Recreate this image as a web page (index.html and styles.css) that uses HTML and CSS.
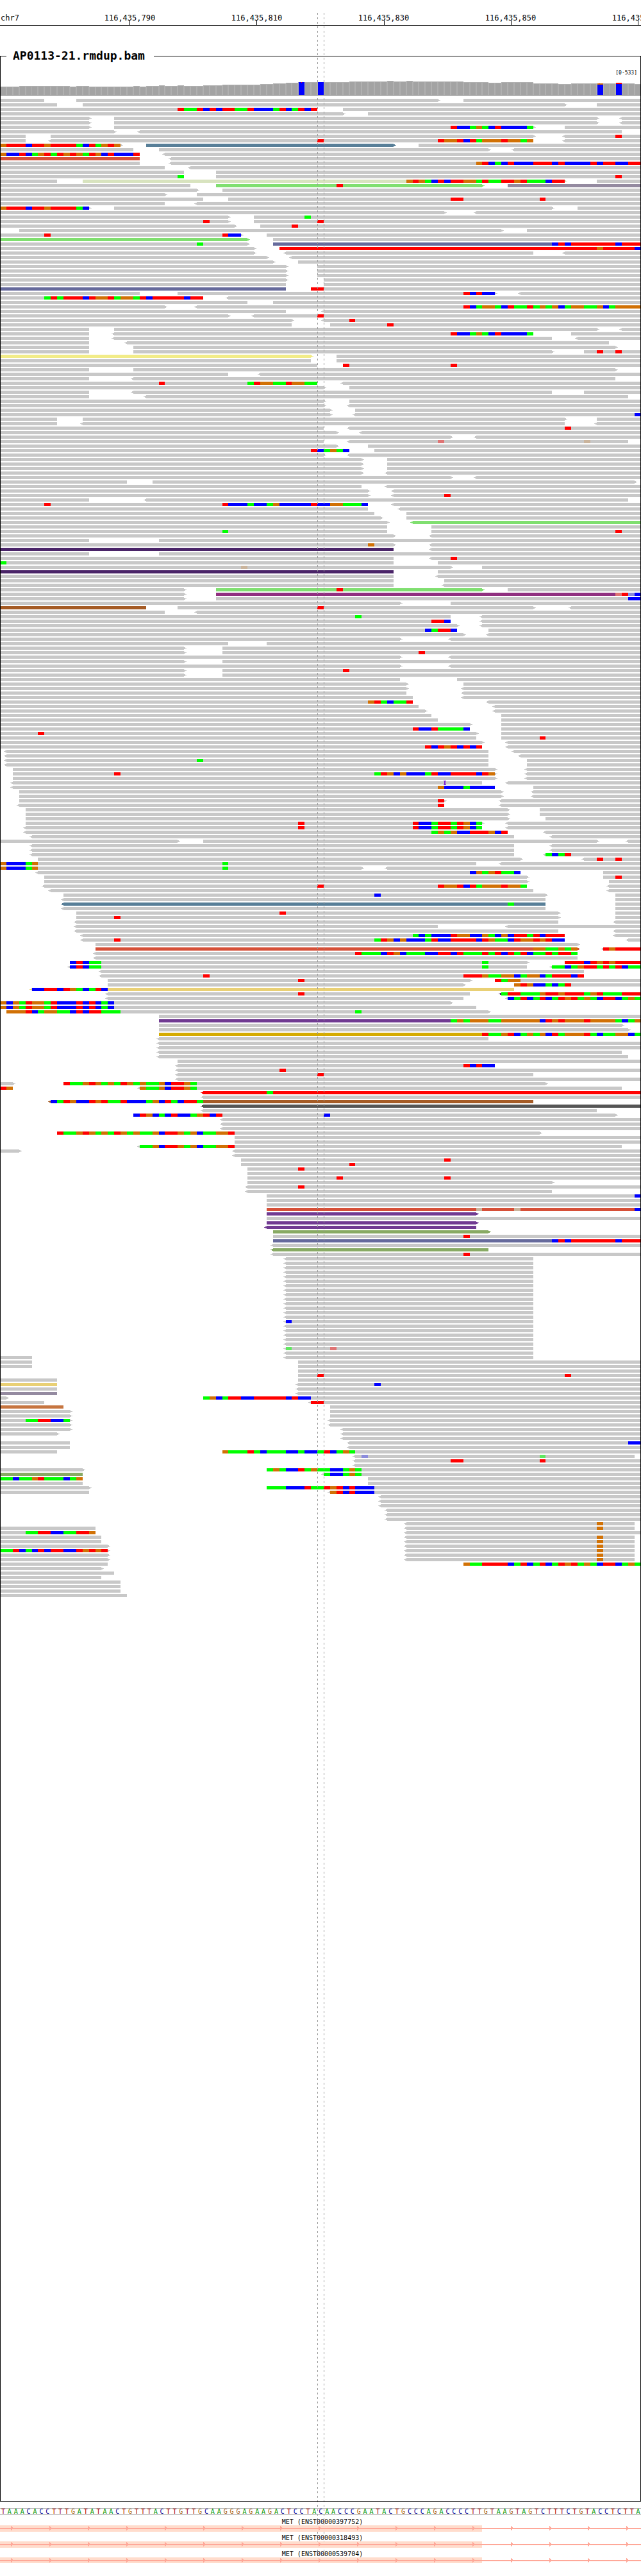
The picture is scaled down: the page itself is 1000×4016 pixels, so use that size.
FILE: index.html
```html
<!DOCTYPE html>
<html lang="en">
<head>
<meta charset="utf-8">
<title>AP0113-21.rmdup.bam</title>
<link rel="stylesheet" href="styles.css">
</head>
<body>
<main class="viewer">
  <header class="ruler" id="ruler"><span class="chrom">chr7</span></header>
  <fieldset class="track">
    <legend class="track-name">AP0113-21.rmdup.bam</legend>
    <p class="range">[0-533]</p>
    <svg class="coverage" id="coverage" aria-label="Coverage"></svg>
    <svg class="reads" id="reads" aria-label="Aligned reads"></svg>
  </fieldset>
  <div class="sequence" id="sequence"></div>
  <section class="genes" id="genes"></section>
  <div class="guide guide-start"></div>
  <div class="guide guide-end"></div>
</main>
<script src="viewer.js"></script>
</body>
</html>
```
FILE: styles.css
```css
* { box-sizing: border-box; }

body {
  margin: 0;
  background: #fff;
  color: #000;
  font-family: "DejaVu Sans Mono", monospace;
}

.viewer {
  position: relative;
  isolation: isolate;
  display: flex;
  flex-direction: column;
  min-height: 100vh;
  padding-bottom: 20px;
  overflow: hidden;
}

.ruler {
  position: relative;
  height: 40px;
  padding: 20px 0 0 1px;
  border-bottom: 1px solid #000;
  font-size: 12px;
  line-height: 16px;
}

.tick {
  position: absolute;
  top: 20px;
  bottom: 0;
  width: 100px;
  margin-left: -50px;
  text-align: center;
}

.tick::after {
  content: "";
  position: absolute;
  left: 50px;
  bottom: 0;
  width: 1px;
  height: 7px;
  background: #000;
}

.track {
  flex: 1;
  min-width: 0;
  margin: 36px 0 0;
  padding: 0;
  border: 1px solid #000;
}

.track-name {
  margin-left: 9px;
  padding: 0 14px 0 10px;
  font-size: 18px;
  font-weight: bold;
  line-height: 22px;
}

.range {
  margin: 10px 5px 0;
  font-size: 8px;
  line-height: 12px;
  text-align: right;
}

.coverage,
.reads {
  position: relative;
  display: block;
  width: calc(100% + 2px);
  margin-left: -1px;
  shape-rendering: crispEdges;
}

.coverage { z-index: -1; height: 29px; margin-bottom: 5px; }
.reads { z-index: -3; }

.guide {
  position: absolute;
  z-index: -2;
  top: 20px;
  bottom: 25px;
  width: 1px;
  background: repeating-linear-gradient(#999 0 3px, transparent 3px 7px);
}

.guide-start { left: calc(100% * 50 / 101); }
.guide-end { left: calc(100% * 51 / 101); }

.sequence {
  display: flex;
  margin-top: 10px;
  border-top: 1px solid #aaa;
  border-bottom: 1px solid #aaa;
  font-size: 10px;
  line-height: 9px;
}

.base { flex: 1 1 0; min-width: 0; text-align: center; }
.base-A { color: #009600; }
.base-C { color: #000096; }
.base-G { color: #aa6414; }
.base-T { color: #aa0000; }

.genes { padding-top: 6px; }

.gene { height: 25px; }
.gene:last-child { height: 19px; }

.gene-name {
  display: block;
  height: 10px;
  padding-left: 6px;
  font-size: 10px;
  line-height: 10px;
  text-align: center;
}

.gene-shape {
  display: block;
  width: 100%;
  height: 10px;
  shape-rendering: crispEdges;
}

.gene:last-child .gene-shape { height: 9px; }
```
FILE: viewer.js
```js
const NS = "http://www.w3.org/2000/svg";
const BASES = 101;
const pct = (n) => (n * 100) / BASES + "%";

function add(parent, name, attrs) {
  const node = document.createElementNS(NS, name);
  for (const key in attrs) node.setAttribute(key, attrs[key]);
  parent.appendChild(node);
  return node;
}

/* Ruler */
const ruler = document.getElementById("ruler");
[790, 810, 830, 850, 870].forEach((n, i) => {
  const tick = document.createElement("span");
  tick.className = "tick";
  tick.style.left = pct(20.45 + i * 20);
  tick.textContent = "116,435," + n;
  ruler.appendChild(tick);
});

/* Coverage: [number of bases, bar height] */
const coverage = [
  [3, 13], [8, 14], [1, 13], [2, 14], [7, 13], [1, 14], [1, 13], [2, 14], [1, 15],
  [2, 14], [1, 15], [3, 14], [3, 15], [6, 16], [2, 17], [2, 18], [2, 19], [8, 20],
  [6, 21], [1, 22], [2, 21], [1, 22], [8, 21], [4, 20], [2, 19], [5, 20], [4, 18],
  [2, 17], [10, 18], [1, 17]
];
const variants = {
  47: [["#00f", 20, 20], ["#f00", 20, 1, 0.45]],
  50: [["#00f", 20, 20], ["#f00", 20, 1, 0.45]],
  94: [["#d17105", 18, 2], ["#00f", 16, 16], ["#f00", 18, 1, 0.45]],
  97: [["#f00", 19, 2], ["#00f", 17, 17]]
};
const cov = document.getElementById("coverage");
let col = 0;
for (const [count, height] of coverage) {
  for (let k = 0; k < count; k++, col++) {
    add(cov, "rect", { x: pct(col), y: 28 - height, width: pct(1), height, fill: "#b0b0b0" });
    if (!variants[col]) {
      add(cov, "rect", { x: pct(col + 0.1), y: 29 - height, width: pct(0.8), height: height - 1, fill: "#a3a3a3" });
      continue;
    }
    for (const [fill, top, h, inset] of variants[col]) {
      add(cov, "rect", {
        x: pct(col + (inset || 0.1)), y: 28 - top, width: pct(inset ? 0.1 : 0.9), height: h, fill
      });
    }
  }
}
add(cov, "rect", { x: 0, y: 28, width: "100%", height: 1, fill: "#808080" });

/* Reads. Each line is one packed row: [mate colour][<]start-end[>][/position + bases]... */
const colours = {
  "": "#c8c8c8", S: "#587f98", R: "#d65038", P: "#d8e3bf", L: "#80df70", M: "#948aa0",
  B: "#666a9c", X: "#ff0000", Y: "#f2ec88", D: "#4a2468", V: "#903080", O: "#a55b25",
  E: "#e9d075", U: "#703a92", W: "#d5ab00", Z: "#555555", F: "#88aa64", N: "#c67540"
};
const baseColours = {
  A: "#00ff00", C: "#0000ff", G: "#d17105", T: "#ff0000",
  a: "#60e860", c: "#8c8cdc", g: "#cab49c", t: "#df7474"
};
const rows = `
0-7 12-69> 73-101
0-9 13-89> 94-101
0-50/28TAATCTCTTAATCCCATCATCT 54-101
0-54> 58-101
0-14> 18-94> <98-101
0-14> 18-94> <98-101
0-14> 18-84>/71TCCAGACTCCCCA 89-101
0-18> <22-98
0-4 8-84> <89-101/97T
0-4 <8-84/50T/69TGGTCTAGGGTGGAG <89-101
0-19>/0GTTTCTTGTTTTACTAGTG S23-62> 66-101
0-21 25-77> <81-101
0-22/0GCCTCAGTATGTGATGCTCCCT <26-101
R0-22 <27-101
0-22 <27-101/75GTCACTCCCTTTCTCCCCTCTTCCTT
0-26 <30-101
0-29 34-101
0-29/28A 34-101/97T
0-9 P13-89>/64GTGACTCTTGGATAATTGTAAACTT 94-101
0-30 L34-76>/53T M80-101
0-31> 35-101
0-26> 31-101
0-32 36-101/71TT/85T
0-26 <31-101
0-14>/0GTTTCTTGTTTTAC 18-87> 91-101
0-70> <75-101
0-36> 40-101/48A
0-36>/32T 40-101/50T
0-37> 41-101/46T
3-79> 83-101
0-38>/7T/35TCC 42-101
L0-39> 43-101
0-39>/31A B43-101/87CTCTTTTTTTCTTT
0-40> X44-101/94G/100C
0-40> <45-84 <89-101
0-42> <46-101
0-43> 47-101
0-45> 50-101
0-45> 50-101
0-45> 50-101
0-45> 51-101
0-45 51-101
B0-45 49-101/49TT
0-22 28-78>/73TCTCC <82-101
0-32/7ATATTTCTGGTAGGATCTTTTTCTT <36-101
0-39 43-101
0-26> <31-101/73TCAGGACTAATAGAGCAGGAAGCAGGGG
0-45 <51-101
0-36> <40-101/50T
0-46> <51-101/55T
0-46 52-101/61T
0-14 18-94> <98-101
0-14 <18-84/71TCCAGACTCCCCA 90-101
0-14 <18-87 <91-101
0-14 <20-96
0-14 21-97>
0-14 21-87> 92-101/94T/97T
Y0-49> 53-101
0-49 53-101
0-50 54-101/54T/71T
0-14 21-97>
0-36 <41-101
0-14 <21-97
0-50/25T/39ATGGAATGGAA <54-101
0-51> 55-101
0-14 <21-87 92-101
0-14 <23-99
0-51> 55-101
0-51> <55-101
0-52> 56-101
0-52> <56-101/100C
0-9 13-89> 94-101
0-9 <13-89 <94-101
0-51 <55-101/89T
0-53> <57-101
0-71> <75-101
0-51 <55-99/69t/92g
0-53> 58-101
0-55/49TCAGAC 59-101
0-51> <55-101
0-57> 61-101
0-57> 61-101
0-57> 61-101
0-57> <61-101
0-71> <75-101
0-20 24-100>
0-57 <61-101
0-58> <62-101
0-58> <62-101/70T
0-14 <23-99
0-58/7T/35TCCCACCAGCCCCCTCCGGAAAC <62-101
0-58 <63-101
0-59 64-101
0-60> 64-101
0-61> L<65-101
0-61 68-101
0-61/35A 68-101/97T
0-62> <68-101
0-14 25-101
0-62>/58G <68-101
D0-62 <68-101
0-14 25-101
0-62 <68-101/71T
0-62/0A 69-101
0-71>/38g 76-101
D0-62 69-101
0-62 <69-101
0-62 70-101
0-62 <70-101
0-29> L34-76>/53T 80-101
0-29> V34-101/97tTcC
0-29> 34-101/99CC
0-63> 71-101
O0-23 28-84>/50T <90-101
0-26 <31-101
0-71/56A <76-101
0-71/68TTC <76-101
0-72> <76-101
0-72/67CATTC 77-101
0-73> <77-101
0-63> <71-101
0-36 42-101
0-29> 35-101
0-29> 35-101/66T
0-63> <71-101
0-29> 35-101
0-63> <71-101
0-29> 35-101/54T
0-29> 35-101
0-63 72-101
0-64> 73-101
0-64> <73-101
0-64 <73-101
0-65 <73-101
0-65/58GTACAAT <77-101
0-66 <78-101
0-67> <78-101
0-68 79-101
0-69 79-101
0-74> 79-101
0-74/65TCCTAAAAC 79-101
0-75>/6T 79-101
0-75 79-101/85T
0-76> <80-101
0-76/67TCTGTCTCT <80-101
<1-77 <81-101
<1-77 <82-101
<1-77/31A 83-101
<1-77 83-101
2-78> <83-101
2-78>/18T/59ATGCGCCCATCCTTTTCTG <83-101
2-78> <83-101
<2-76/70i <80-101
<2-78/69GCCCACCCC 84-101
3-79> <84-101
3-79> <84-101
3-70>/69T <79-101
<3-70/69T <79-101
4-80> 85-101
4-80> 85-101
4-80> 86-101
4-76>/47T/65TCCATTATGCA <80-101
<4-76/47T/65TCCATTATGCA <80-101
<4-80/68AGAGCCTTTGCT <86-101
<5-81 <87-101
0-28> 32-94> <99-101
<5-81 <87-101
<5-81 <87-101
<5-81 <86-101/86ACAT
6-82> <92-101/94T/97T
0-75/0GCCCAG/35A <79-101
0-57>/0GCCCAG/35A <61-101
<6-82/74CGAGTAAC 95-101
7-83> 95-101/97T
7-83> 96-101
<7-83/50T/69TGGTCTAGGGTGGA <96-101
<8-84 <96-101
10-86>/59C 97-101
<10-86 97-101
S<10-86/80A 97-101
<10-86 97-101
12-88>/44T 97-101
12-88>/18T 97-101
<12-88 <97-101
<12-69 <80-101
<12-88 <97-101
<13-89/65ACACCCTGGCCGACGCTTATCTTT <97-101
<13-89/18T/59ATGCGCCCATCCTTTTCTGAACTGGTGTCC <99-101
15-91>
R15-91>/84GGAAGAG <95-101/95TGTTTT
<15-91/56TAAACTGCAAACCTTCTAAATATCTATCAATATTA
<15-91
11-83>/11CTCAA/76A 89-101/89TTTCTGTGTTTT
<11-83/11CTCAA/76A <87-101/87AACAGTTATATCAA
<16-92
<16-92/32T/73TTTGAAGGCAGGCATTTCT
17-74>/47T 78-101/78TAGG
17-73> 81-101/81GTGCCACAT
E<5-81/5CCTTCTGACATC
<17-74/47T D<79-101/79ATTAAAGTTGTTTAGTAAATTT
<17-73 <80-101/80CATCATCATGTAGACTTCAGA
0-71>/0GCGATGGATCCCTCTCAC
0-75/0GCGATGGATCCCTCTCAC
1-77>/1GGGTCAGGAACTCTTAAA/56A
25-101
U25-101/71AGAGGGAAGGGGGGCTGTGGGTGGGGACAG
25-98>
25-99>
W25-101/76TAAGTCAGAGCTAGGGTACAAGGCA
<25-77
<25-101
<25-101
<25-98
<25-99
28-101
<28-78/73TCTCC
<28-101/44T
<28-84/50T
<28-101
0-2> 10-86>/10TAAGTGAGATGAGAAGCTTGA
0-2/0TG <22-98/22GAAGCTTGA
X<32-101/42A
<32-101
O<8-84/8CATGCCTGTAATCCCAGCTACTTA
Z<32-101
<32-94
21-97>/21CTGCACTCCAGTCT/51C
<35-101
<35-101
<35-101
9-85>/9TAAGTGAGATGAGAAGCTTGAGCAAGGT
37-101
37-101
<22-98/22AAGCTTGAGCAAGGT
0-3> <37-101
<37-101
38-101/70T
38-101/55T
39-101/47T
39-101
39-101/53T/70T
39-87>
<39-101/47T
<39-87
42-101/100C
42-101
42-101
R42-101/75g/81g/100C
U42-75>
42-101
U42-75>
U<42-75
F43-77>
43-101/73T
B43-101/87CTCTTTTTTTCTTT
<43-101
F<43-77
<43-101/73T
<45-84
<45-84
<45-84
<45-84
<45-84
<45-84
<45-84
<45-84
<45-84
<45-84
<45-84
<45-84
<45-84
<45-84
<45-84/45C
<45-84
<45-84
<45-84
<45-84
<45-84
<45-84/45a/52t
<45-84
0-5 <45-84
0-5 47-101
0-5 47-101
47-101
47-101/50T/89T
0-9 47-101
E0-9 <47-101/59C
0-9 <47-101
M0-9 <47-101
0-1> 32-101/32AGCATTCCTTTTTCTCC
0-7 <49-101/49TT
N0-10 52-101
0-11> 52-101
0-11> 52-101
0-11>/4AATTCCA <52-101
0-11> <52-101
0-11> <54-101
0-9> <54-101
<54-101
0-11 <55-101/99CC
0-11 <55-101
0-9 35-101/35GAAATACAAACCACCATCAGA
<56-100/57c/85a
<56-101/71TT/85T
<56-101
0-13> 42-101/42AGACCTAGAACCAGA
F0-13 <51-101/51ACCAGA
0-13/0AACAAGTAAACAG 58-101
0-13 58-101
0-14> 42-101/42AAACCCTAATGTCTCCC
0-14 <52-101/52GTCTCCC
<60-101
<60-101
<60-101
<61-101
<61-101
<61-101
<64-100/94G
0-15 <64-100/94G
0-15/4AATTCCAATTG <64-101
0-16 <64-100/94G
0-16 <64-100/94G
0-17> <64-100/94G
0-17>/0AATCACTCTTCCTGTGT <64-100/94G
0-17> <64-100/94G
0-17> <64-100/94G
0-17 73-101/73GAATTTTCATCATCATGTAGACTTCAGA
0-16>
0-18
0-16
0-19
0-19
0-19
0-20
`.trim().split("\n");

const reads = document.getElementById("reads");
reads.style.height = rows.length * 7 + "px";

function mark(x, y, d, fill) {
  const anchor = add(reads, "svg", { x: pct(x), y, overflow: "visible" });
  add(anchor, "path", { d, fill });
}

function drawMismatches(text, y) {
  const start = parseInt(text, 10);
  const seq = text.replace(/^\d+/, "");
  if (seq === "i") {
    mark(start, y, "M-1-1h4v1h-1v5h1v1h-4v-1h1v-5h-1z", "#7a1fd6");
    return;
  }
  for (let i = 0, j; i < seq.length; i = j) {
    for (j = i + 1; seq[j] === seq[i]; j++);
    add(reads, "rect", {
      x: pct(start + i), y, width: pct(j - i), height: 5, fill: baseColours[seq[i]]
    });
  }
}

rows.forEach((row, i) => {
  const y = i * 7;
  for (const token of row.split(" ")) {
    const [shape, ...mismatches] = token.split("/");
    const [, key, left, start, end, right] = shape.match(/^([A-Z]?)(<?)(\d+)-(\d+)(>?)$/);
    const fill = colours[key];
    add(reads, "rect", { x: pct(+start), y, width: pct(end - start), height: 5, fill });
    if (left) mark(+start, y, "M0 1h-2v1h-2v1h2v1h2z", fill);
    if (right) mark(+end, y, "M0 1h2v1h2v1h-2v1h-2z", fill);
    mismatches.forEach((m) => drawMismatches(m, y));
  }
});

/* Reference sequence */
const sequence = document.getElementById("sequence");
const reference =
  "TAAACACCTTTGATATAACTGTTTACTTGTTGCAAGGGAGAAGACTCCTAC" +
  "AACCCGAATACTGCCCAGACCCCTTGTAAGTAGTCTTTCTGTACCTCTTA";
for (const letter of reference) {
  const base = document.createElement("span");
  base.className = "base base-" + letter;
  base.textContent = letter;
  sequence.appendChild(base);
}

/* Transcripts */
const genes = document.getElementById("genes");
["ENST00000397752", "ENST00000318493", "ENST00000539704"].forEach((id) => {
  const gene = document.createElement("div");
  gene.className = "gene";
  gene.innerHTML = `<span class="gene-name">MET (${id})</span>
    <svg class="gene-shape">
      <defs><pattern id="arrow-${id}" width="60" height="10" patternUnits="userSpaceOnUse">
        <path d="M17 1h1v1h1v1h1v3h-1v1h-1v1h-1z" fill="#ffa899"/>
      </pattern></defs>
      <rect width="${pct(76)}" height="10" fill="#ffdccc"/>
      <rect y="4" width="100%" height="2" fill="#ffa899"/>
      <rect width="100%" height="10" fill="url(#arrow-${id})"/>
    </svg>`;
  genes.appendChild(gene);
});
```
